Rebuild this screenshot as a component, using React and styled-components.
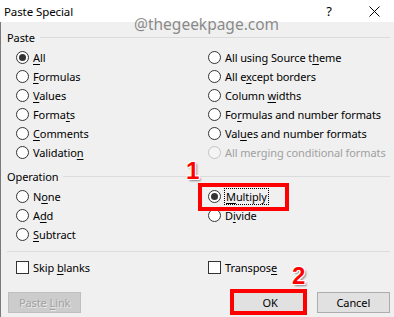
import React from "react";
import styled, { createGlobalStyle } from "styled-components";

const Global = createGlobalStyle`
  html, body { margin: 0; padding: 0; background: #f0f0f0; }
  body { width: 394px; height: 317px; overflow: hidden; }
  * { box-sizing: border-box; }
`;

const Window = styled.div`
  position: relative;
  width: 394px;
  height: 317px;
  background: #f0f0f0;
  font-family: "Noto Sans", "Open Sans", sans-serif;
  font-size: 11px;
  letter-spacing: -0.1px;
  color: #000;
  display: flex;
  flex-direction: column;
  overflow: hidden;
`;

const TitleBar = styled.div`
  height: 22px;
  background: #fff;
  display: flex;
  align-items: center;
  padding-left: 4px;
  flex-shrink: 0;
`;

const Title = styled.div`
  flex: 1;
  font-size: 11.5px;
`;

const TitleButton = styled.div`
  width: ${(p) => p.$w}px;
  height: 22px;
  display: flex;
  align-items: center;
  justify-content: center;
  font-size: 13px;
`;

const Body = styled.div`
  flex: 1;
  border-left: 1px solid #7a7a7a;
  padding: 7px 4px 0 6px;
  display: flex;
  flex-direction: column;
`;

const GroupHeader = styled.div`
  height: 16px;
  display: flex;
  align-items: center;
  gap: 5px;
  margin-top: ${(p) => p.$mt || 0}px;
  &::after {
    content: "";
    flex: 1;
    height: 1px;
    background: #dcdcdc;
  }
`;

const OptionGrid = styled.div`
  display: grid;
  grid-template-columns: 192px 1fr;
  grid-auto-flow: column;
  grid-template-rows: repeat(${(p) => p.$rows}, 19px);
  padding-left: 9px;
  margin-top: 3px;
`;

const Option = styled.label`
  display: flex;
  align-items: center;
  gap: 4px;
  color: ${(p) => (p.$disabled ? "#a0a0a0" : "#000")};
  white-space: nowrap;
`;

const Radio = styled.span`
  width: 13px;
  height: 13px;
  border-radius: 50%;
  border: 1px solid ${(p) => (p.$disabled ? "#c4c4c4" : "#333")};
  background: ${(p) => (p.$disabled ? "#f4f4f4" : "#fff")};
  display: flex;
  align-items: center;
  justify-content: center;
  flex-shrink: 0;
  &::after {
    content: "";
    display: ${(p) => (p.$checked ? "block" : "none")};
    width: 7px;
    height: 7px;
    border-radius: 50%;
    background: #333;
  }
`;

const Check = styled.span`
  width: 13px;
  height: 13px;
  border: 1px solid #333;
  background: #fff;
  flex-shrink: 0;
`;

const Label = styled.span`
  outline: ${(p) => (p.$focus ? "1px dotted #000" : "none")};
  padding: 0 ${(p) => (p.$focus ? 1 : 0)}px;
  line-height: 15px;
`;

const Separator = styled.div`
  height: 1px;
  background: #dcdcdc;
  margin-top: 7px;
`;

const CheckRow = styled.div`
  display: grid;
  grid-template-columns: 192px 1fr;
  height: 19px;
  padding-left: 9px;
  margin-top: 6px;
`;

const ButtonRow = styled.div`
  display: flex;
  align-items: center;
  margin-top: 15px;
  padding-left: 1px;
`;

const Button = styled.div`
  width: 74px;
  height: 21px;
  display: flex;
  align-items: center;
  justify-content: center;
  background: ${(p) => (p.$disabled ? "#cccccc" : "#e1e1e1")};
  border: 1px solid ${(p) => (p.$disabled ? "#bfbfbf" : "#adadad")};
  color: ${(p) => (p.$disabled ? "#a3a3a3" : "#000")};
  margin-left: ${(p) => p.$ml || 0}px;
  text-shadow: ${(p) => (p.$disabled ? "1px 1px 0 #e8e8e8" : "none")};
`;

const Watermark = styled.div`
  position: absolute;
  left: 134px;
  top: 13px;
  font-family: "Noto Sans", "Open Sans", sans-serif;
  font-size: 15.5px;
  letter-spacing: 0;
  color: rgba(90, 90, 90, 0.7);
`;

const RedBox = styled.div`
  position: absolute;
  left: ${(p) => p.$x}px;
  top: ${(p) => p.$y}px;
  width: ${(p) => p.$w}px;
  height: ${(p) => p.$h}px;
  border: 4px solid #ff0000;
  pointer-events: none;
`;

const Badge = styled.div`
  position: absolute;
  left: ${(p) => p.$x}px;
  top: ${(p) => p.$y}px;
  font-family: "Liberation Sans", Arial, sans-serif;
  font-weight: bold;
  font-size: 24px;
  letter-spacing: 0;
  color: #ff0000;
  text-shadow: 1px 1px 0 #fff, -1px -1px 0 #fff, 1px -1px 0 #fff, -1px 1px 0 #fff, 2px 2px 2px rgba(0,0,0,0.45);
`;

const U = styled.u`
  text-decoration-thickness: 1px;
  text-underline-offset: 2px;
`;

function Opt({ label, u, checked, disabled, focus }) {
  let content = label;
  if (u !== undefined) {
    content = (
      <>
        {label.slice(0, u)}
        <U>{label[u]}</U>
        {label.slice(u + 1)}
      </>
    );
  }
  return (
    <Option $disabled={disabled}>
      <Radio $checked={checked} $disabled={disabled} />
      <Label $focus={focus}>{content}</Label>
    </Option>
  );
}

function Chk({ label, u }) {
  return (
    <Option>
      <Check />
      <Label>
        {label.slice(0, u)}
        <U>{label[u]}</U>
        {label.slice(u + 1)}
      </Label>
    </Option>
  );
}

export default function App() {
  return (
    <Window>
      <Global />
      <TitleBar>
        <Title>Paste Special</Title>
        <TitleButton $w={50}>?</TitleButton>
        <TitleButton $w={40}>
          <svg width="11" height="11" viewBox="0 0 11 11">
            <path d="M0.5 0.5 L10.5 10.5 M10.5 0.5 L0.5 10.5" stroke="#000" strokeWidth="1" />
          </svg>
        </TitleButton>
      </TitleBar>
      <Body>
        <GroupHeader>Paste</GroupHeader>
        <OptionGrid $rows={6}>
          <Opt label="All" u={0} checked />
          <Opt label="Formulas" u={0} />
          <Opt label="Values" u={0} />
          <Opt label="Formats" u={5} />
          <Opt label="Comments" u={0} />
          <Opt label="Validation" u={9} />
          <Opt label="All using Source theme" u={18} />
          <Opt label="All except borders" u={5} />
          <Opt label="Column widths" u={7} />
          <Opt label="Formulas and number formats" u={2} />
          <Opt label="Values and number formats" u={3} />
          <Opt label="All merging conditional formats" disabled />
        </OptionGrid>
        <GroupHeader $mt={6}>Operation</GroupHeader>
        <OptionGrid $rows={3}>
          <Opt label="None" u={1} />
          <Opt label="Add" u={1} />
          <Opt label="Subtract" u={0} />
          <Opt label="Multiply" u={0} checked focus />
          <Opt label="Divide" u={1} />
        </OptionGrid>
        <Separator />
        <CheckRow>
          <Chk label="Skip blanks" u={5} />
          <Chk label="Transpose" u={8} />
        </CheckRow>
        <ButtonRow>
          <Button $disabled>
            <span>
              Paste <U>L</U>ink
            </span>
          </Button>
          <Button $ml={152}>OK</Button>
          <Button $ml={10}>Cancel</Button>
        </ButtonRow>
      </Body>
      <Watermark>@thegeekpage.com</Watermark>
      <RedBox $x={198} $y={183} $w={91} $h={28} />
      <RedBox $x={230} $y={289} $w={77} $h={26} />
      <Badge $x={186} $y={157}>1</Badge>
      <Badge $x={292} $y={262}>2</Badge>
    </Window>
  );
}
